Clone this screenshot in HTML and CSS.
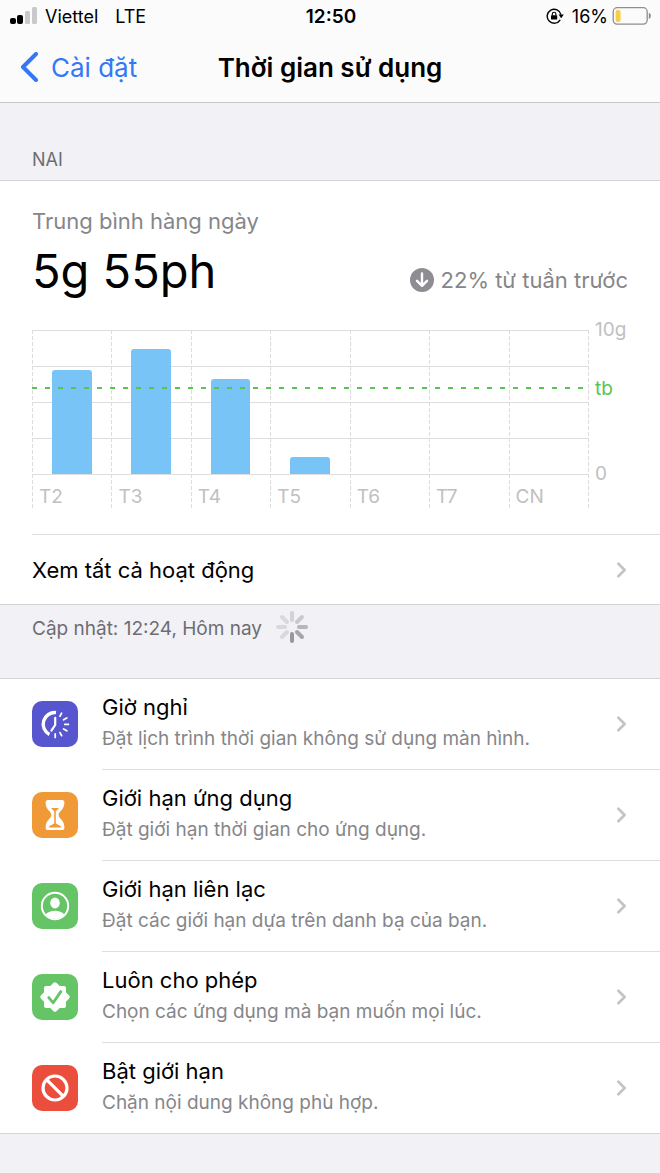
FILE: index.html
```html
<!DOCTYPE html>
<html lang="vi">

<head>
  <meta charset="UTF-8">
  <meta name="viewport" content="width=device-width, initial-scale=1.0">
  <title>Thời gian sử dụng</title>
  <link rel="stylesheet" href="styles.css">
</head>

<body>
  <header class="top">
    <div class="status">
      <div class="status-left">
        <svg class="signal" viewBox="0 0 28 18" aria-hidden="true">
          <rect x="0" y="11" width="6" height="6" rx="2" />
          <rect x="7" y="8" width="6" height="9" rx="2" />
          <rect class="off" x="15" y="4" width="5" height="13" rx="1.5" />
          <rect class="off" x="22" y="0" width="5" height="17" rx="1.5" />
        </svg>
        <span>Viettel</span>
        <span class="network">LTE</span>
      </div>
      <time class="clock">12:50</time>
      <div class="status-right">
        <svg class="lock" viewBox="0 0 18 16" aria-hidden="true">
          <path d="M14.2 11.8A7 7 0 1 1 15 6.6" fill="none" stroke="#000" stroke-width="1.4" />
          <path d="M12.6 6.6h5.2l-2.6 3.6z" />
          <rect x="5" y="7.2" width="6.2" height="4.4" rx=".6" />
          <path d="M6.3 7.4V6a1.8 1.8 0 0 1 3.6 0v1.4" fill="none" stroke="#000" stroke-width="1.1" />
        </svg>
        <span>16%</span>
        <svg class="battery" viewBox="0 0 40 18" aria-hidden="true">
          <rect x="1.2" y=".7" width="34" height="16.4" rx="4" fill="none" stroke="#8e8e92" stroke-width="1.3" />
          <rect x="3.6" y="3" width="5" height="12" rx="2" fill="#f7ce46" />
          <path d="M36.8 5.8c2.8.9 2.8 5.3 0 6.2z" fill="#8e8e92" />
        </svg>
      </div>
    </div>
    <nav class="nav">
      <a class="back" href="#">
        <svg viewBox="0 0 18 30" aria-hidden="true">
          <path d="M16 2 3 15l13 13" />
        </svg>
        Cài đặt
      </a>
      <h1>Thời gian sử dụng</h1>
    </nav>
  </header>

  <main>
    <h2 class="section-title">NAI</h2>

    <section class="group">
      <div class="summary">
        <p class="summary-label">Trung bình hàng ngày</p>
        <div class="summary-row">
          <p class="total">5g 55ph</p>
          <p class="change">
            <svg viewBox="0 0 24 24" aria-hidden="true">
              <circle cx="12" cy="12" r="12" fill="#8e8e92" />
              <path d="M12 5.5v12M7 12.8l5 5 5-5" fill="none" stroke="#fff" stroke-width="2.4" stroke-linecap="round" stroke-linejoin="round" />
            </svg>
            22% từ tuần trước
          </p>
        </div>

        <div class="chart">
          <div class="plot">
            <div class="day"><div class="track"><div class="bar" style="height: 72%"></div></div><span>T2</span></div>
            <div class="day"><div class="track"><div class="bar" style="height: 87%"></div></div><span>T3</span></div>
            <div class="day"><div class="track"><div class="bar" style="height: 66%"></div></div><span>T4</span></div>
            <div class="day"><div class="track"><div class="bar" style="height: 12%"></div></div><span>T5</span></div>
            <div class="day"><div class="track"></div><span>T6</span></div>
            <div class="day"><div class="track"></div><span>T7</span></div>
            <div class="day"><div class="track"></div><span>CN</span></div>
            <div class="average"></div>
          </div>
          <div class="axis">
            <span>10g</span>
            <span class="axis-average">tb</span>
            <span>0</span>
          </div>
        </div>
      </div>

      <a class="all-activity" href="#">
        <span>Xem tất cả hoạt động</span>
        <svg class="chevron" viewBox="0 0 10 18" aria-hidden="true"><path d="m1.5 2 7 7-7 7" /></svg>
      </a>
    </section>

    <div class="updated">
      <span>Cập nhật: 12:24, Hôm nay</span>
      <svg class="spinner" viewBox="-16 -16 32 32" aria-hidden="true">
        <path d="M0-7v-7" stroke="#d3d3d7" />
        <path d="m5-5 5-5" stroke="#cacace" />
        <path d="M7 0h7" stroke="#b7b7bb" />
        <path d="m5 5 5 5" stroke="#a6a6aa" />
        <path d="M0 7v7" stroke="#98989c" />
        <path d="m-5 5-5 5" stroke="#d9d9dd" />
        <path d="M-7 0h-7" stroke="#d9d9dd" />
        <path d="m-5-5-5-5" stroke="#d9d9dd" />
      </svg>
    </div>

    <ul class="group options">
      <li>
        <a class="option" href="#">
          <svg class="icon purple" viewBox="0 0 46 46" aria-hidden="true">
            <path d="M24 11.6A11.6 11.6 0 0 0 17.4 33.4" fill="none" stroke="#fff" stroke-width="3.4" />
            <path d="M23.2 16.8v7.2l-3.8 5.6" fill="none" stroke="#fff" stroke-width="2.2" stroke-linecap="round" stroke-linejoin="round" />
            <path d="m28 15.2 1.6-3M31.6 18.8l3.2-1.8M32.8 23.4h3.6M31.6 28l3.2 1.8M28 31.6l1.6 3M23.2 33v3.4" fill="none" stroke="#fff" stroke-width="1.8" stroke-linecap="round" />
          </svg>
          <span class="option-text">
            <span class="option-title">Giờ nghỉ</span>
            <span class="option-desc">Đặt lịch trình thời gian không sử dụng màn hình.</span>
          </span>
          <svg class="chevron" viewBox="0 0 10 18" aria-hidden="true"><path d="m1.5 2 7 7-7 7" /></svg>
        </a>
      </li>
      <li>
        <a class="option" href="#">
          <svg class="icon orange" viewBox="0 0 46 46" aria-hidden="true">
            <path d="M16 8h14q2.4 0 2.4 2.6C32.4 18 26.6 19.4 26.6 23S32.4 28 32.4 35.4q0 2.6-2.4 2.6H16q-2.4 0-2.4-2.6C13.6 28 19.4 26.6 19.4 23S13.6 18 13.6 10.6Q13.6 8 16 8z" fill="#fff" />
            <path d="M19 16h8l-3.200 3.200v12.200l5 2.800q.8 1.200-.6 1.200h-10.400q-1.400 0-.6-1.200l5-2.800V19.200z" fill="#f09a37" />
          </svg>
          <span class="option-text">
            <span class="option-title">Giới hạn ứng dụng</span>
            <span class="option-desc">Đặt giới hạn thời gian cho ứng dụng.</span>
          </span>
          <svg class="chevron" viewBox="0 0 10 18" aria-hidden="true"><path d="m1.5 2 7 7-7 7" /></svg>
        </a>
      </li>
      <li>
        <a class="option" href="#">
          <svg class="icon green" viewBox="0 0 46 46" aria-hidden="true">
            <circle cx="23" cy="23" r="13.2" fill="none" stroke="#fff" stroke-width="2" />
            <ellipse cx="23" cy="20" rx="4.8" ry="5.4" fill="#fff" />
            <path d="M13.6 31.6c2.4-2.6 5.6-3.8 9.4-3.8s7 1.2 9.400 3.800A13 13 0 0 1 13.6 31.6z" fill="#fff" />
          </svg>
          <span class="option-text">
            <span class="option-title">Giới hạn liên lạc</span>
            <span class="option-desc">Đặt các giới hạn dựa trên danh bạ của bạn.</span>
          </span>
          <svg class="chevron" viewBox="0 0 10 18" aria-hidden="true"><path d="m1.5 2 7 7-7 7" /></svg>
        </a>
      </li>
      <li>
        <a class="option" href="#">
          <svg class="icon green" viewBox="0 0 46 46" aria-hidden="true">
            <g fill="#fff" stroke="#fff" stroke-width="4" stroke-linejoin="round">
              <rect x="14" y="14" width="18" height="18" />
              <rect x="14" y="14" width="18" height="18" transform="rotate(45 23 23)" />
            </g>
            <path d="m16.8 23.6 4.4 5.2 7.6-11.2" fill="none" stroke="#65c466" stroke-width="2.8" stroke-linecap="round" stroke-linejoin="round" />
          </svg>
          <span class="option-text">
            <span class="option-title">Luôn cho phép</span>
            <span class="option-desc">Chọn các ứng dụng mà bạn muốn mọi lúc.</span>
          </span>
          <svg class="chevron" viewBox="0 0 10 18" aria-hidden="true"><path d="m1.5 2 7 7-7 7" /></svg>
        </a>
      </li>
      <li>
        <a class="option" href="#">
          <svg class="icon red" viewBox="0 0 46 46" aria-hidden="true">
            <circle cx="23" cy="23" r="12" fill="none" stroke="#fff" stroke-width="3.2" />
            <path d="m14.6 14.6 16.8 16.8" stroke="#fff" stroke-width="3.2" />
          </svg>
          <span class="option-text">
            <span class="option-title">Bật giới hạn</span>
            <span class="option-desc">Chặn nội dung không phù hợp.</span>
          </span>
          <svg class="chevron" viewBox="0 0 10 18" aria-hidden="true"><path d="m1.5 2 7 7-7 7" /></svg>
        </a>
      </li>
    </ul>
  </main>
</body>

</html>
```
FILE: styles.css
```css
* {
  box-sizing: border-box;
}

body {
  margin: 0;
  background: #f2f1f6;
  color: #000;
  font-family: Inter, "Liberation Sans", sans-serif;
  font-size: 22px;
}

h1,
h2,
p,
ul {
  margin: 0;
  padding: 0;
}

ul {
  list-style: none;
}

a {
  color: inherit;
  text-decoration: none;
}

svg {
  display: block;
  flex-shrink: 0;
}

/* status bar and navigation */
.top {
  background: #fbfbfc;
  border-bottom: 1px solid #c8c7cc;
}

.status {
  display: grid;
  grid-template-columns: 1fr auto 1fr;
  align-items: center;
  height: 32px;
  padding: 0 8px 0 10px;
  font-size: 18px;
}

.status-left,
.status-right {
  display: flex;
  align-items: center;
}

.status-left {
  gap: 7px;
}

.status-right {
  justify-content: flex-end;
  gap: 4px;
}

.signal {
  width: 28px;
  height: 18px;
}

.signal .off {
  fill: #c9c9cb;
}

.network {
  margin-left: 10px;
}

.clock {
  font-size: 19px;
  font-weight: 600;
}

.lock {
  width: 18px;
  height: 16px;
  margin-right: 4px;
}

.battery {
  width: 40px;
  height: 18px;
}

.nav {
  display: grid;
  grid-template-columns: 1fr auto 1fr;
  align-items: center;
  height: 70px;
  padding: 0 20px;
}

.nav h1 {
  font-size: 26px;
  font-weight: 600;
}

.back {
  display: flex;
  align-items: center;
  gap: 13px;
  color: #3478f6;
  font-size: 26px;
}

.back svg {
  width: 18px;
  height: 30px;
}

.back path {
  fill: none;
  stroke: currentColor;
  stroke-width: 4;
  stroke-linecap: round;
  stroke-linejoin: round;
}

/* groups */
.section-title {
  padding: 46px 32px 9px;
  color: #6d6d72;
  font-size: 18px;
  font-weight: 400;
  line-height: 22px;
}

.group {
  background: #fff;
  border-top: 1px solid #d4d4d7;
  border-bottom: 1px solid #d4d4d7;
}

.summary {
  padding: 26px 32px 24px;
}

.summary-label {
  color: #868689;
  line-height: 28px;
}

.summary-row {
  display: flex;
  justify-content: space-between;
  align-items: center;
}

.total {
  font-size: 47px;
  line-height: 72px;
}

.change {
  display: flex;
  align-items: center;
  gap: 7px;
  padding-top: 17px;
  color: #868689;
}

.change svg {
  width: 24px;
  height: 24px;
}

/* weekly chart */
.chart {
  display: flex;
  margin-top: 23px;
}

.plot {
  position: relative;
  display: flex;
  flex: 1;
  height: 180px;
  background: repeating-linear-gradient(#dedee0 0 1px, transparent 1px 36px) 0 0 / 100% 145px no-repeat;
}

.plot::after {
  content: "";
  width: 1px;
  background: repeating-linear-gradient(#dcdcde 0 4px, transparent 4px 6px);
}

.day {
  flex: 1;
  background: repeating-linear-gradient(#dcdcde 0 4px, transparent 4px 6px) 0 0 / 1px 100% no-repeat;
}

.track {
  display: flex;
  justify-content: center;
  align-items: flex-end;
  height: 144px;
}

.bar {
  width: 50%;
  background: #78c4f6;
  border-radius: 3px 3px 0 0;
}

.day span {
  display: block;
  padding: 10px 7px 0;
  color: #c0c0c2;
  font-size: 19px;
  line-height: 26px;
}

.average {
  position: absolute;
  top: 57px;
  left: 0;
  right: 0;
  height: 2px;
  background: repeating-linear-gradient(90deg, #5ac452 0 5px, transparent 5px 13px);
}

.axis {
  display: flex;
  flex-direction: column;
  justify-content: space-between;
  width: 39px;
  height: 168px;
  margin-top: -12px;
  padding-left: 6px;
  color: #c0c0c2;
  font-size: 19px;
  line-height: 24px;
}

.axis-average {
  margin-bottom: 26px;
  color: #5ac452;
}

.all-activity {
  display: flex;
  justify-content: space-between;
  align-items: center;
  height: 70px;
  margin-left: 32px;
  padding-right: 34px;
  border-top: 1px solid #dedee0;
}

.chevron {
  width: 9px;
  height: 16px;
}

.chevron path {
  fill: none;
  stroke: #c4c4c6;
  stroke-width: 3;
  stroke-linecap: round;
  stroke-linejoin: round;
}

.updated {
  display: flex;
  gap: 14px;
  height: 73px;
  padding: 6px 32px 0;
  color: #6d6d72;
  font-size: 19px;
  line-height: 36px;
}

.spinner {
  width: 32px;
  height: 32px;
}

.spinner path {
  stroke-width: 4;
  stroke-linecap: round;
}

/* list of settings */
.option {
  display: flex;
  align-items: center;
  padding: 0 34px 0 32px;
}

.icon {
  width: 46px;
  height: 46px;
  margin-right: 24px;
  border-radius: 10px;
}

.purple {
  background: #5756ce;
}

.orange {
  background: #f09a37;
}

.green {
  background: #65c466;
}

.red {
  background: #eb4e3d;
}

.option-text {
  flex: 1;
  padding: 12px 0 14px;
}

.option-title,
.option-desc {
  display: block;
  line-height: 32px;
}

.option-desc {
  color: #868689;
  font-size: 19px;
}

.options li + li::before {
  content: "";
  display: block;
  height: 1px;
  margin-left: 102px;
  background: #dedee0;
}
```
